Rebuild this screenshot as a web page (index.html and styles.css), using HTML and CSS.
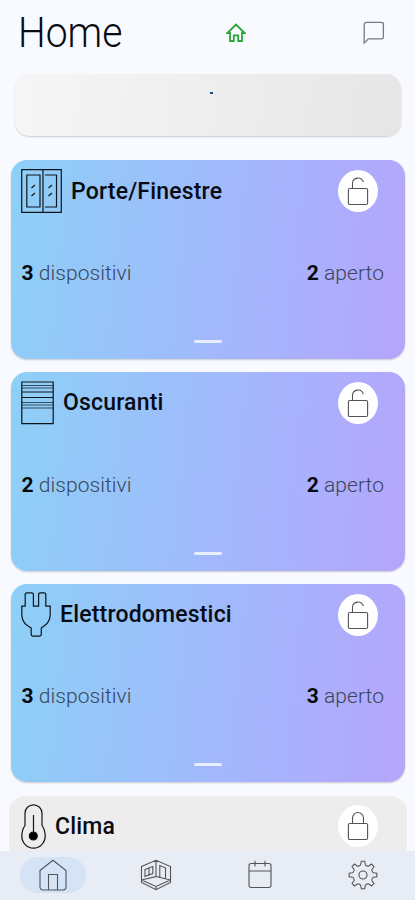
FILE: index.html
```html
<!DOCTYPE html>
<html lang="it">
<head>
<meta charset="UTF-8" />
<meta name="viewport" content="width=device-width, initial-scale=1" />
<title>Home</title>
<link rel="stylesheet" href="styles.css">
</head>
<body>

<header class="topbar">
  <h1>Home</h1>
  <svg class="home-status" width="20" height="20" viewBox="0 0 20 20">
    <path d="M1.4 10 10 1.6 18.6 10H16V18H12.2V12.4H7.8V18H4V10Z" />
  </svg>
  <svg class="chat" width="22" height="24" viewBox="0 0 22 24">
    <path d="M1.2 22V3.6Q1.2 1.4 3.4 1.4H18.2Q20.4 1.4 20.4 3.6V15.6Q20.4 17.8 18.2 17.8H5.4Z" />
  </svg>
</header>

<main>
  <section class="banner"><span class="dot"></span></section>

  <section class="card">
    <div class="card-head">
      <svg class="icon" width="41" height="44" viewBox="0 0 41 44">
        <path d="M.7.7H40.3V43.3H.7ZM22 .7V43.3M5.8 6H19V38H5.8ZM24 6H35.5V38H24" />
        <path d="M10.5 19 14 16M10.5 27 14 24M27.5 19 31 16M27.5 27 31 24" />
      </svg>
      <h2>Porte/Finestre</h2>
      <span class="lock">
        <svg width="22" height="30" viewBox="0 0 22 30"><path d="M2.8 12.5H19.2Q20.6 12.5 20.6 14V27Q20.6 28.5 19.2 28.5H2.8Q1.4 28.5 1.4 27V14Q1.4 12.5 2.8 12.5M5.5 12.5V7A5.5 5.5 0 0 1 16.3 6.2" /></svg>
      </span>
    </div>
    <div class="card-info">
      <p><b>3</b> dispositivi</p>
      <p><b>2</b> aperto</p>
    </div>
    <span class="handle"></span>
  </section>

  <section class="card">
    <div class="card-head">
      <svg class="icon" width="33" height="44" viewBox="0 0 33 44">
        <path d="M.8 1H32.2V42.6H.8ZM.8 11H32.2M.8 16.5H32.2" />
        <path class="thin" d="M.8 4.5H32.2M.8 7H32.2M.8 21.5H32.2M.8 24H32.2M.8 27H32.2" />
      </svg>
      <h2>Oscuranti</h2>
      <span class="lock">
        <svg width="22" height="30" viewBox="0 0 22 30"><path d="M2.8 12.5H19.2Q20.6 12.5 20.6 14V27Q20.6 28.5 19.2 28.5H2.8Q1.4 28.5 1.4 27V14Q1.4 12.5 2.8 12.5M5.5 12.5V7A5.5 5.5 0 0 1 16.3 6.2" /></svg>
      </span>
    </div>
    <div class="card-info">
      <p><b>2</b> dispositivi</p>
      <p><b>2</b> aperto</p>
    </div>
    <span class="handle"></span>
  </section>

  <section class="card">
    <div class="card-head">
      <svg class="icon" width="30" height="45" viewBox="0 0 30 45">
        <path d="M.8 14.2H4.2V2.6Q4.2.8 6 .8H10.6Q12.4.8 12.4 2.6V14.2H17.6V2.6Q17.6.8 19.4.8H23Q24.8.8 24.8 2.6V14.2H29.2V22Q29.2 29.5 24 33.2L20.3 36V42Q20.3 44.2 18.3 44.2H12.2Q10.2 44.2 10.2 42V36L6 33.2Q.8 29.5.8 22Z" />
      </svg>
      <h2>Elettrodomestici</h2>
      <span class="lock">
        <svg width="22" height="30" viewBox="0 0 22 30"><path d="M2.8 12.5H19.2Q20.6 12.5 20.6 14V27Q20.6 28.5 19.2 28.5H2.8Q1.4 28.5 1.4 27V14Q1.4 12.5 2.8 12.5M5.5 12.5V7A5.5 5.5 0 0 1 16.3 6.2" /></svg>
      </span>
    </div>
    <div class="card-info">
      <p><b>3</b> dispositivi</p>
      <p><b>3</b> aperto</p>
    </div>
    <span class="handle"></span>
  </section>

  <section class="card off">
    <div class="card-head">
      <svg class="icon" width="25" height="45" viewBox="0 0 25 45">
        <path d="M4 21.5V9.3A8.5 8.5 0 0 1 21 9.3V21.5Q24.2 26 24.2 32A11.7 12.2 0 0 1 .8 32Q.8 26 4 21.5ZM12.5 11V28" />
        <circle class="fill" cx="12.3" cy="32" r="4" />
      </svg>
      <h2>Clima</h2>
      <span class="lock">
        <svg width="22" height="30" viewBox="0 0 22 30"><path d="M2.8 12.5H19.2Q20.6 12.5 20.6 14V27Q20.6 28.5 19.2 28.5H2.8Q1.4 28.5 1.4 27V14Q1.4 12.5 2.8 12.5M5.5 12.5V7A5.5 5.5 0 0 1 16.5 7V12.5" /></svg>
      </span>
    </div>
  </section>
</main>

<nav>
  <a class="active">
    <svg width="28" height="32" viewBox="0 0 28 32">
      <path d="M1 11.5 14 1.2 27 11.5V27.8Q27 31 23.8 31H4.2Q1 31 1 27.8ZM9.5 31V15.5H18.5V31" />
    </svg>
  </a>
  <a>
    <svg width="32" height="32" viewBox="0 0 32 32">
      <path d="M1.5 7.5 16 1.3 30.5 7.5V23.5L16 30.7 1.5 23.5ZM16 1.3V17.5L1.5 21M16 17.5 30.5 21M5 10.5 12.8 7.5V14.5L5 17.5ZM9 9V16M19.8 18.3V6.5L25.5 8.8V19.7M1.5 21 16 27.5 30.5 21M16 27.5V30.7" />
    </svg>
  </a>
  <a>
    <svg width="24" height="29" viewBox="0 0 24 29">
      <path d="M3.2 3.5H20.8Q23 3.5 23 5.7V25.3Q23 27.5 20.8 27.5H3.2Q1 27.5 1 25.3V5.7Q1 3.5 3.2 3.5M1 11H23M7 .8V6.5M17 .8V6.5" />
    </svg>
  </a>
  <a>
    <svg width="30" height="30" viewBox="-15 -15 30 30">
      <path id="tooth" d="M-3.9-9.4Q-2.6-9.2-2.3-10.5L-1.7-13.8H1.7L2.3-10.5Q2.6-9.2 3.9-9.4" />
      <use href="#tooth" transform="rotate(45)" />
      <use href="#tooth" transform="rotate(90)" />
      <use href="#tooth" transform="rotate(135)" />
      <use href="#tooth" transform="rotate(180)" />
      <use href="#tooth" transform="rotate(225)" />
      <use href="#tooth" transform="rotate(270)" />
      <use href="#tooth" transform="rotate(315)" />
      <circle r="4" />
    </svg>
  </a>
</nav>

</body>
</html>
```
FILE: styles.css
```css
* {
  box-sizing: border-box;
}
body {
  margin: 0;
  height: 900px;
  display: flex;
  flex-direction: column;
  overflow: hidden;
  font-family: Roboto, sans-serif;
  background: #f8faff;
  color: #080c12;
}
h1, h2, p {
  margin: 0;
}
svg {
  display: block;
  fill: none;
  stroke: #50545a;
  stroke-width: 1.1;
}
.topbar {
  height: 74px;
  flex: none;
  display: grid;
  grid-template-columns: 208px 1fr auto;
  align-items: center;
  padding: 0 30px 9px 18px;
}
h1 {
  font-size: 42px;
  font-weight: 300;
  line-height: 50px;
  transform: scaleX(0.93);
  transform-origin: left;
}
.home-status {
  stroke: #28a735;
  stroke-width: 1.8;
}
.chat {
  stroke: #777a80;
  stroke-width: 1.3;
}
main {
  flex: 1;
  min-height: 0;
  overflow: hidden;
  display: flex;
  flex-direction: column;
  gap: 13.2px;
  padding: 0 10px 0 11px;
}
.banner {
  flex: none;
  height: 62px;
  margin: 0 4px 11.3px;
  padding-top: 18px;
  border-radius: 15px;
  background: linear-gradient(97deg, #f6f6f6, #e6e6e6);
  box-shadow: 0 1px 2px rgba(0, 0, 0, 0.2);
}
.dot {
  display: block;
  width: 3px;
  height: 2px;
  margin: 0 auto;
  transform: translateX(3px);
  background: #1d4f80;
}
.card {
  flex: none;
  height: 198.5px;
  padding: 8.8px 27px 0 10px;
  border-radius: 16px;
  background: linear-gradient(96deg, #8dd0f7, #a5b5fd 62%, #b5a5fb);
  box-shadow: 0 1px 2px rgba(0, 0, 0, 0.2);
}
.card.off {
  margin: 0 -2px;
  padding: 8.8px 29px 0 12px;
  background: #ededed;
  box-shadow: none;
}
.card-head {
  height: 44px;
  display: flex;
  align-items: center;
  gap: 9px;
}
.icon {
  flex: none;
  stroke: #10151b;
  stroke-width: 1.2;
}
.icon .thin {
  stroke-width: 0.7;
}
.icon .fill {
  fill: #000;
}
h2 {
  font-size: 23px;
  font-weight: 500;
  letter-spacing: 0.18px;
}
.lock {
  width: 40px;
  height: 42px;
  margin-left: auto;
  display: flex;
  align-items: center;
  justify-content: center;
  border-radius: 50%;
  background: #fff;
}
.card-info {
  display: flex;
  justify-content: space-between;
  margin: 45.7px -6px 0 0.5px;
  font-size: 21px;
  line-height: 28px;
  font-weight: 300;
  letter-spacing: 0.06px;
  color: #38465a;
}
.card-info b {
  font-weight: 700;
  color: #05080c;
}
.handle {
  display: block;
  width: 28px;
  height: 3px;
  margin: 53px auto 0;
  transform: translateX(8px);
  border-radius: 2px;
  background: #e8f0ff;
}
nav {
  flex: none;
  height: 49px;
  display: grid;
  grid-template-columns: repeat(4, 1fr);
  align-items: center;
  justify-items: center;
  padding: 0 0 2px 1px;
  background: #e8ecf5;
}
nav a {
  width: 66px;
  height: 36px;
  display: flex;
  align-items: center;
  justify-content: center;
  border-radius: 18px;
}
nav .active {
  background: #d4e3f5;
}
```
